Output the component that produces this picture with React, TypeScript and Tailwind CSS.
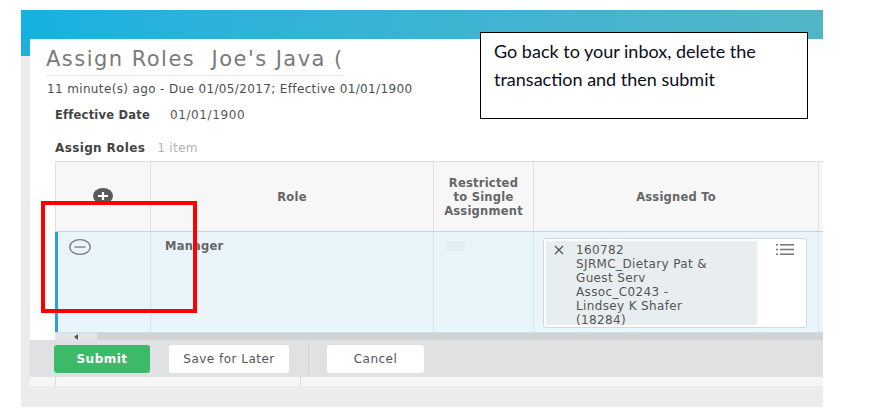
import React from "react";

function PlusIcon() {
  return (
    <svg width="20" height="16" viewBox="0 0 20 16">
      <ellipse cx="10" cy="8" rx="10" ry="8" fill="#5a5a5a" />
      <path d="M5 8h10M10 4v8" stroke="#fff" strokeWidth="2.2" />
    </svg>
  );
}

function MinusIcon() {
  return (
    <svg width="22" height="16" viewBox="0 0 22 16">
      <ellipse cx="11" cy="8" rx="10.2" ry="7.3" fill="none" stroke="#7a7a7a" strokeWidth="1.3" />
      <path d="M5.5 8h11" stroke="#7a7a7a" strokeWidth="1.3" />
    </svg>
  );
}

function ListIcon() {
  return (
    <svg width="18" height="11" viewBox="0 0 18 11">
      <g fill="#7b7b7b">
        <rect x="0" y="0" width="2" height="1.6" />
        <rect x="0" y="4.7" width="2" height="1.6" />
        <rect x="0" y="9.4" width="2" height="1.6" />
        <rect x="4" y="0" width="14" height="1.6" />
        <rect x="4" y="4.7" width="14" height="1.6" />
        <rect x="4" y="9.4" width="14" height="1.6" />
      </g>
    </svg>
  );
}

function RolesTable() {
  return (
    <div className="mt-[5px] ml-[25px] w-[900px] shrink-0">
      {/* header */}
      <div className="flex h-[70px] bg-[#f7f7f7] border-t border-[#dedede] text-[11.5px] leading-[14px] tracking-[0.02em] font-bold text-[#666]">
        <div className="w-[95px] border-l border-[#e0e0e0] flex justify-center pt-[26px]">
          <PlusIcon />
        </div>
        <div className="w-[283px] border-l border-[#e0e0e0] flex items-center justify-center">Role</div>
        <div className="w-[100px] border-l border-[#e0e0e0] flex items-center justify-center text-center whitespace-nowrap">
          Restricted
          <br />
          to Single
          <br />
          Assignment
        </div>
        <div className="w-[285px] border-l border-[#e0e0e0] flex items-center justify-center">Assigned To</div>
        <div className="flex-1 border-l border-[#e0e0e0]" />
      </div>

      {/* row */}
      <div className="flex h-[102px] bg-[#eaf5fb] border-t border-[#b7d7e9] border-b border-b-[#c4dfee]">
        <div className="w-[95px] border-l-[3px] border-[#2d9fe0] pl-[11px] pt-[7px]">
          <MinusIcon />
        </div>
        <div className="w-[283px] border-l border-[#d5e6ef] pl-[14px] pt-[6px] text-[11.5px] leading-[16px] tracking-[0.02em] font-bold text-[#666]">
          Manager
        </div>
        <div className="w-[100px] border-l border-[#d5e6ef] pl-[12px] pt-[9px]">
          <div className="w-[19px] h-[10px] rounded-[2px] bg-[#e1eef4]" />
        </div>
        <div className="w-[285px] border-l border-[#d5e6ef] pl-[9px] pt-[6px]">
          <div className="w-[264px] h-[90px] bg-white border border-[#cfd9de] rounded-[3px] flex p-[2px]">
            <div className="w-[211px] h-[84px] bg-[#e8edef] flex pl-[8px] pt-[2px]">
              <svg width="10" height="10" viewBox="0 0 10 10" className="mt-[2px] shrink-0">
                <path d="M1 1l8 8M9 1l-8 8" stroke="#555" strokeWidth="1.3" />
              </svg>
              <div className="ml-[12px] text-[12px] leading-[14px] tracking-[0.03em] text-[#555] whitespace-nowrap">
                160782
                <br />
                SJRMC_Dietary Pat &amp;
                <br />
                Guest Serv
                <br />
                Assoc_C0243 -
                <br />
                Lindsey K Shafer
                <br />
                (18284)
              </div>
            </div>
            <div className="ml-[19px] mt-[3px]">
              <ListIcon />
            </div>
          </div>
        </div>
        <div className="flex-1 border-l border-[#d5e6ef]" />
      </div>

      {/* scrollbar */}
      <div className="flex h-[7px] bg-[#d3d3d3]">
        <div className="w-[42px] h-full bg-[#e4e4e4] flex items-center justify-center">
          <svg width="6" height="6" viewBox="0 0 6 6">
            <path d="M5 0L1 3l4 3z" fill="#555" />
          </svg>
        </div>
      </div>
    </div>
  );
}

function Card() {
  return (
    <div className="flex-1 min-w-0 bg-white flex flex-col overflow-hidden">
      <div className="pt-[8px] pl-[16px]">
        <div className="w-[299px] border-b border-[#e6e6e6] pb-[3px] text-[21px] leading-[25px] tracking-[0.07em] text-[#7a7a7a] whitespace-nowrap">
          Assign Roles&nbsp; Joe's Java (
        </div>
      </div>
      <div className="mt-[5px] pl-[17px] text-[12px] leading-[16px] tracking-[0.03em] text-[#4d4d4d] whitespace-nowrap">
        11 minute(s) ago - Due 01/05/2017; Effective 01/01/1900
      </div>
      <div className="mt-[10px] pl-[25px] flex text-[11.5px] leading-[16px] tracking-[0.02em]">
        <span className="w-[115px] font-bold text-[#444]">Effective Date</span>
        <span className="text-[12px] tracking-[0.05em] text-[#555]">01/01/1900</span>
      </div>
      <div className="mt-[17px] pl-[25px] flex gap-[12px] text-[12px] leading-[16px] tracking-[0.03em]">
        <span className="font-bold text-[#444]">Assign Roles</span>
        <span className="text-[#b3b3b3]">1 item</span>
      </div>
      <RolesTable />

      {/* footer */}
      <div className="h-[37px] shrink-0 bg-[#dfe1e3] flex items-start pt-[5px] pl-[24px] text-[12px] tracking-[0.04em]">
        <button className="w-[96px] h-[28px] rounded-[3px] bg-[#3dba69] text-white font-bold">Submit</button>
        <button className="ml-[19px] w-[120px] h-[28px] rounded-[3px] bg-white text-[#555]">Save for Later</button>
        <div className="ml-[19px] -mt-[2px] w-px h-[32px] bg-[#cdd0d2]" />
        <button className="ml-[18px] w-[97px] h-[28px] rounded-[3px] bg-white text-[#555]">Cancel</button>
      </div>
      <div className="flex-1 bg-[#f6f6f6] flex">
        <div className="ml-[25px] w-[245px] border-l border-[#dcdcdc]" />
        <div className="border-l border-[#dcdcdc]" />
      </div>
    </div>
  );
}

export default function App() {
  return (
    <div className="relative w-[878px] h-[413px] bg-white overflow-hidden font-['DejaVu_Sans',sans-serif]">
      <div className="pt-[10px] pl-[21px]">
        <div className="w-[802px] h-[397px] bg-[#ececec] flex flex-col overflow-hidden">
          <div className="h-[29px] shrink-0 bg-linear-to-r from-[#14b1e0] to-[#52b5c7]" />
          <div className="flex h-[347px] shrink-0">
            <div className="w-[9px] shrink-0 flex flex-col">
              <div className="h-[17px] bg-[#1cb1dd]" />
            </div>
            <Card />
          </div>
        </div>
      </div>

      {/* annotation: red highlight */}
      <div className="absolute left-[41px] top-[201px] w-[156px] h-[112px] border-4 border-[#ff0000]" />

      {/* annotation: callout */}
      <div className="absolute left-[480px] top-[32px] w-[328px] h-[87px] border border-black bg-white pl-[13px] pt-[4px] font-['Lato',sans-serif] text-[18px] leading-[28px] text-[#0d0d1a]">
        Go back to your inbox, delete the
        <br />
        transaction and then submit
      </div>
    </div>
  );
}
